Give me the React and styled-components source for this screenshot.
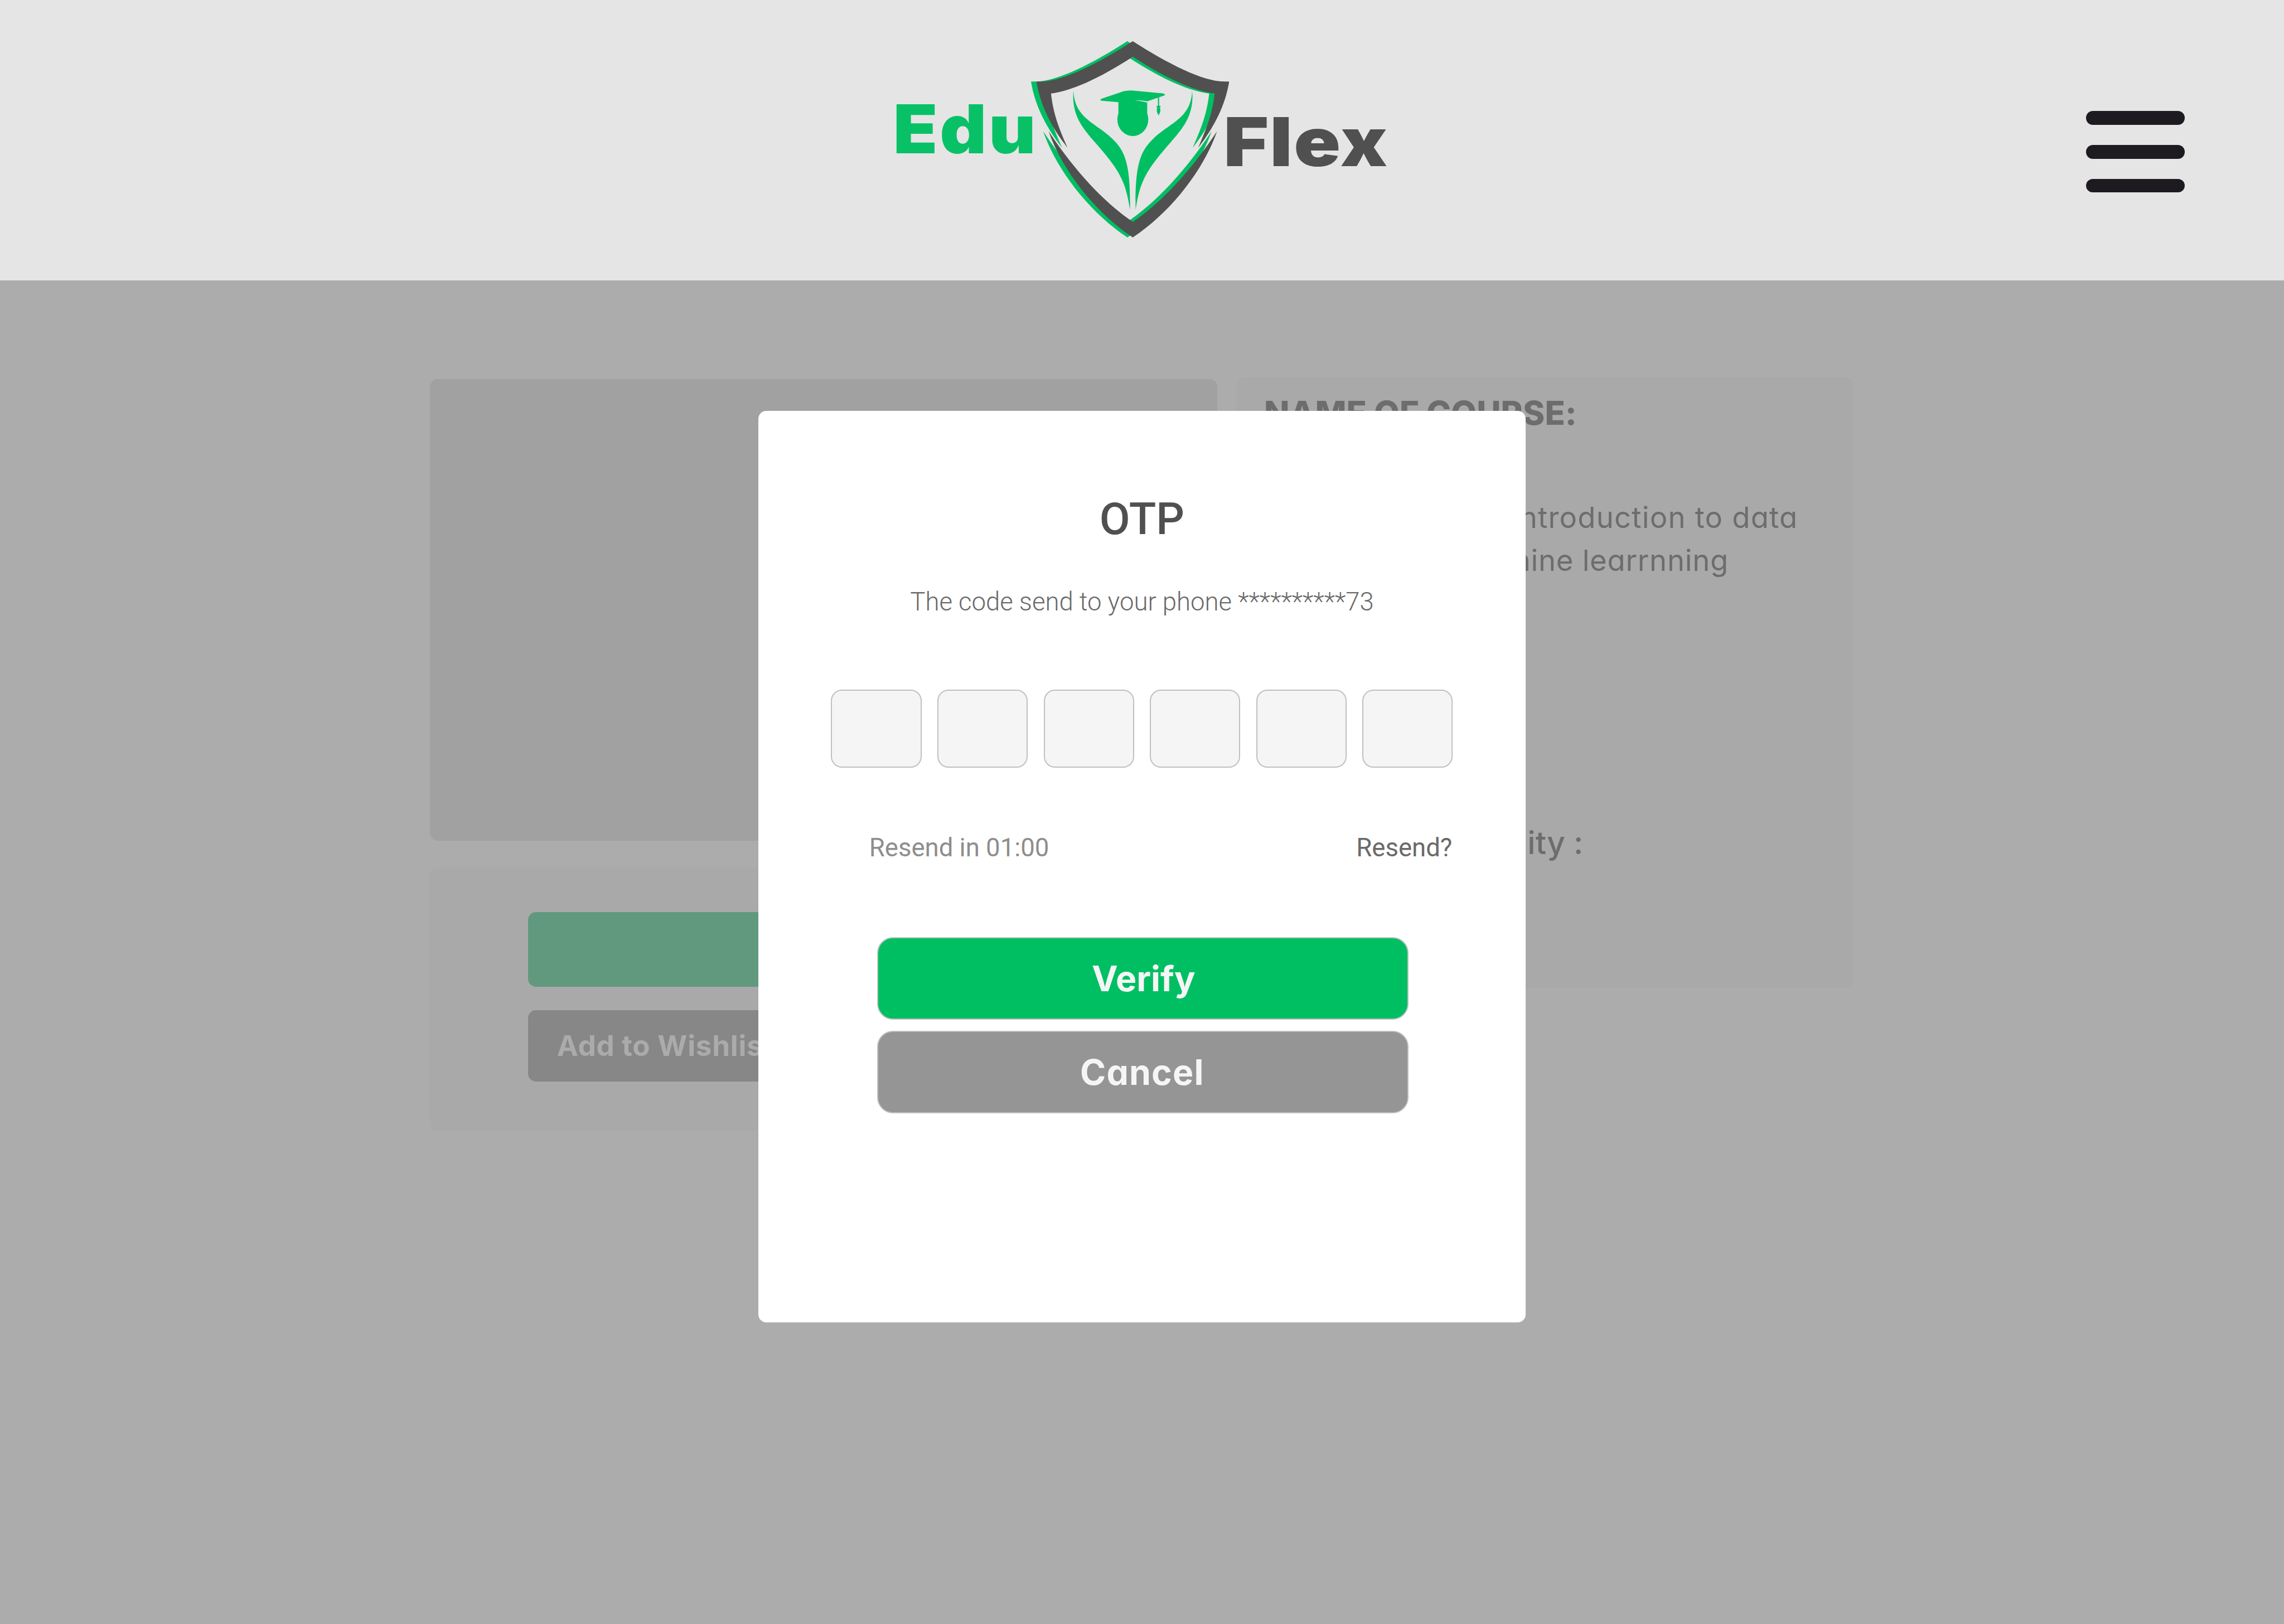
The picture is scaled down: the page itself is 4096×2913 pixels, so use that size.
import React from 'react';
import styled, { createGlobalStyle } from 'styled-components';

/* Sizes are written on a 1440-wide artboard and scaled to the 4096px canvas. */
const u = (n) => `${+((n * 4096) / 1440).toFixed(3)}px`;

const poppinsLike = `Inter, 'Open Sans', sans-serif`;
const roboto = `Roboto, 'Liberation Sans', sans-serif`;

const GlobalStyle = createGlobalStyle`
  * { box-sizing: border-box; }
  body { margin: 0; background: #acacac; overflow: hidden; }
  h1, h2, h3, p { margin: 0; font-weight: inherit; }
  button, input { margin: 0; padding: 0; border: 0; font: inherit; color: inherit; outline: 0; }
`;

const Page = styled.div`
  position: relative;
  width: 4096px;
  height: 2913px;
  overflow: hidden;
  background: #acacac;
  font-family: ${poppinsLike};
  font-feature-settings: 'cv11' 1;
`;

const Header = styled.header`
  display: grid;
  grid-template-columns: 1fr auto 1fr;
  align-items: start;
  height: ${u(177)};
  background: #e5e5e5;
`;

const Logo = styled.div`
  grid-column: 2;
  display: flex;
  align-items: flex-start;
  width: ${u(310)};
`;

const LogoWord = styled.span`
  flex: none;
  width: ${(p) => u(p.$width)};
  margin-top: ${(p) => u(p.$top)};
  text-indent: ${(p) => u(p.$indent)};
  color: ${(p) => p.$color};
  font-size: ${u(42.4)};
  font-weight: 900;
  letter-spacing: ${(p) => u(p.$spacing)};
  line-height: 1;
  white-space: nowrap;
  transform: scaleX(${(p) => p.$stretch});
  transform-origin: left center;
`;

const Shield = styled.svg`
  flex: none;
  display: block;
  width: ${u(125)};
  height: ${u(127.5)};
  margin-top: ${u(25)};
`;

const MenuButton = styled.button`
  justify-self: end;
  display: flex;
  flex-direction: column;
  justify-content: space-between;
  width: ${u(62)};
  height: ${u(51.35)};
  margin: ${u(70.05)} ${u(62.75)} 0 0;
  background: none;
`;

const MenuBar = styled.span`
  height: ${u(8.6)};
  border-radius: ${u(4.3)};
  background: #1d1b20;
`;

const Main = styled.main`
  display: grid;
  grid-template-columns: ${u(496.5)} ${u(389.75)};
  column-gap: ${u(11.75)};
  align-items: start;
  padding: ${u(61)} 0 0 ${u(271)};
`;

const Column = styled.div`
  display: flex;
  flex-direction: column;
  gap: ${u(17)};
  padding-top: ${u(1)};
`;

const VideoPlaceholder = styled.div`
  height: ${u(291)};
  border-radius: ${u(5)};
  background: #a1a1a1;
`;

const PurchaseCard = styled.section`
  display: flex;
  flex-direction: column;
  gap: ${u(14.75)};
  height: ${u(166)};
  padding: ${u(28)} ${u(62)} 0;
  border-radius: ${u(5)};
  background: #a9a9a9;
`;

const PurchaseButton = styled.button`
  height: ${(p) => u(p.$height)};
  padding-left: ${u(18.1)};
  border-radius: ${u(5)};
  background: ${(p) => p.$fill};
  color: #ababab;
  font-size: ${u(18)};
  font-weight: 650;
  letter-spacing: ${u(0.26)};
  line-height: 1;
  text-align: left;
`;

const CourseCard = styled.section`
  height: ${u(385)};
  padding: ${u(12)} 0 0 ${u(17.75)};
  border-radius: ${u(5)};
  background: #a9a9a9;
  color: #6d6d6d;
`;

const CourseHeading = styled.h2`
  font-size: ${u(20.9)};
  font-weight: 800;
  letter-spacing: ${u(0.03)};
  line-height: 1;
  white-space: nowrap;
`;

const CourseText = styled.p`
  margin-top: ${u(42)};
  font-size: ${u(18.5)};
  line-height: ${u(27.1)};
`;

const CourseLine = styled.span`
  display: block;
  padding-left: ${(p) => u(p.$indent)};
  letter-spacing: ${(p) => u(p.$spacing)};
  white-space: nowrap;
`;

const CityLabel = styled.p`
  width: ${u(201.2)};
  margin-top: ${u(154.5)};
  font-size: ${u(20)};
  font-weight: 500;
  line-height: 1;
  text-align: right;
  white-space: nowrap;
`;

const Overlay = styled.div`
  position: absolute;
  inset: 0;
  display: flex;
  justify-content: center;
  align-items: flex-start;
  padding-top: ${u(259)};
`;

const Dialog = styled.section`
  display: flex;
  flex-direction: column;
  width: ${u(484)};
  height: ${u(575)};
  padding: ${u(54.4)} ${u(46)} 0;
  border-radius: ${u(5)};
  background: #fff;
  font-family: ${roboto};
`;

const DialogTitle = styled.h1`
  color: #505050;
  font-size: ${u(28)};
  font-weight: 500;
  line-height: 1;
  text-align: center;
`;

const DialogHint = styled.p`
  margin-top: ${u(30.1)};
  color: #6a6a6a;
  font-size: ${u(16)};
  font-weight: 300;
  line-height: 1;
  text-align: center;
  white-space: nowrap;
`;

const CodeRow = styled.div`
  display: flex;
  gap: ${u(10)};
  margin-top: ${u(47.5)};
`;

const CodeInput = styled.input`
  flex: none;
  width: ${u(57)};
  height: ${u(49)};
  border: ${u(1)} solid #c0c0c0;
  border-radius: ${u(7)};
  background: #f5f5f5;
  text-align: center;
`;

const ResendRow = styled.div`
  display: flex;
  justify-content: space-between;
  margin-top: ${u(42.6)};
  padding: 0 ${u(0.4)} 0 ${u(24)};
  font-size: ${u(16)};
  line-height: 1;
`;

const ResendText = styled.span`
  color: ${(p) => p.$color};
`;

const Actions = styled.div`
  display: flex;
  flex-direction: column;
  gap: ${u(7)};
  margin-top: ${u(48.4)};
  padding: 0 ${u(28)} 0 ${u(29)};
`;

const ActionButton = styled.button`
  height: ${u(52)};
  border: ${u(1)} solid #c0c0c0;
  border-radius: ${u(10)};
  background: ${(p) => p.$fill};
  color: #f5f5f5;
  font-family: ${poppinsLike};
  font-size: ${u(22)};
  font-weight: 650;
  letter-spacing: ${(p) => u(p.$spacing)};
  line-height: 1;
  text-indent: ${(p) => u(p.$nudge)};
`;

const topArc =
  'M2857 104 C2770 160 2680 205.5 2628 205.7 L2613.7 205.7 C2624 270 2655 325 2692 373 C2668 318 2656 285 2650.4 236 C2700 230 2770 200 2857 143 Z';
const bottomArc =
  'M2644.3 331.4 C2678 428 2760 535 2857 599.3 L2857 560 C2790 515 2715 438 2644.3 331.4 Z';
const leaf =
  'M2707 229 C2710 300 2765 310 2806 351 C2833 378 2852 405 2849.6 529.4 C2842 480 2833 448 2798 403 C2750 340 2700 310 2707 229 Z';

const ShieldHalf = () => (
  <>
    <path d={topArc} />
    <path d={bottomArc} />
  </>
);

const ShieldOutline = () => (
  <>
    <ShieldHalf />
    <g transform="translate(5713.4 0) scale(-1 1)">
      <ShieldHalf />
    </g>
  </>
);

const ShieldMark = () => (
  <Shield viewBox="2600 100 500 510" aria-hidden="true">
    <g fill="#00bf63" transform="translate(-13.7 0)">
      <ShieldOutline />
    </g>
    <g fill="#505050">
      <ShieldOutline />
    </g>
    <g fill="#00bf63">
      <path d={leaf} />
      <path d={leaf} transform="translate(5713.4 0) scale(-1 1)" />
      <ellipse cx="2856.7" cy="301.7" rx="39" ry="41.6" />
      <path d="M2778 249 L2826 233 Q2838 228 2856 228.5 L2932 235.8 Q2941 238 2936 241 L2893.3 255.7 Q2876 252 2861 253.7 Q2880 255 2893 259.3 V287 H2820.3 V258 L2778 254.3 Q2772 252.5 2778 249 Z" />
      <rect x="2920" y="244" width="3" height="26" />
      <ellipse cx="2921.6" cy="269" rx="5.3" ry="2.4" />
      <path d="M2918.5 271 Q2914.5 281 2921.6 291.2 Q2928.8 281 2924.8 271 Z" />
    </g>
  </Shield>
);

export default function App() {
  return (
    <Page>
      <GlobalStyle />
      <Header>
        <Logo>
          <LogoWord $width={85} $top={60.1} $indent={-1.7} $color="#08c167" $stretch={1.08} $spacing={1.2}>
            Edu
          </LogoWord>
          <ShieldMark />
          <LogoWord $width={100} $top={68.2} $indent={-3} $color="#505050" $stretch={1.147} $spacing={0.65}>
            Flex
          </LogoWord>
        </Logo>
        <MenuButton aria-label="Menu">
          <MenuBar />
          <MenuBar />
          <MenuBar />
        </MenuButton>
      </Header>

      <Main>
        <Column>
          <VideoPlaceholder />
          <PurchaseCard>
            <PurchaseButton $height={47.25} $fill="#61997e" />
            <PurchaseButton $height={45} $fill="#878787">
              Add to Wishlist
            </PurchaseButton>
          </PurchaseCard>
        </Column>
        <CourseCard>
          <CourseHeading>NAME OF COURSE:</CourseHeading>
          <CourseText>
            <CourseLine $indent={156.4} $spacing={0.42}>introduction to data</CourseLine>
            <CourseLine $indent={118.2} $spacing={0.25}>machine learrnning</CourseLine>
          </CourseText>
          <CityLabel>City :</CityLabel>
        </CourseCard>
      </Main>

      <Overlay>
        <Dialog role="dialog">
          <DialogTitle>OTP</DialogTitle>
          <DialogHint>The code send to your phone **********73</DialogHint>
          <CodeRow>
            {[0, 1, 2, 3, 4, 5].map((i) => (
              <CodeInput key={i} maxLength={1} />
            ))}
          </CodeRow>
          <ResendRow>
            <ResendText $color="#8e8e8e">Resend in 01:00</ResendText>
            <ResendText $color="#6a6a6a">Resend?</ResendText>
          </ResendRow>
          <Actions>
            <ActionButton $fill="#00bf63" $spacing={0} $nudge={1}>Verify</ActionButton>
            <ActionButton $fill="#959595" $spacing={0.4} $nudge={-0.8}>Cancel</ActionButton>
          </Actions>
        </Dialog>
      </Overlay>
    </Page>
  );
}
